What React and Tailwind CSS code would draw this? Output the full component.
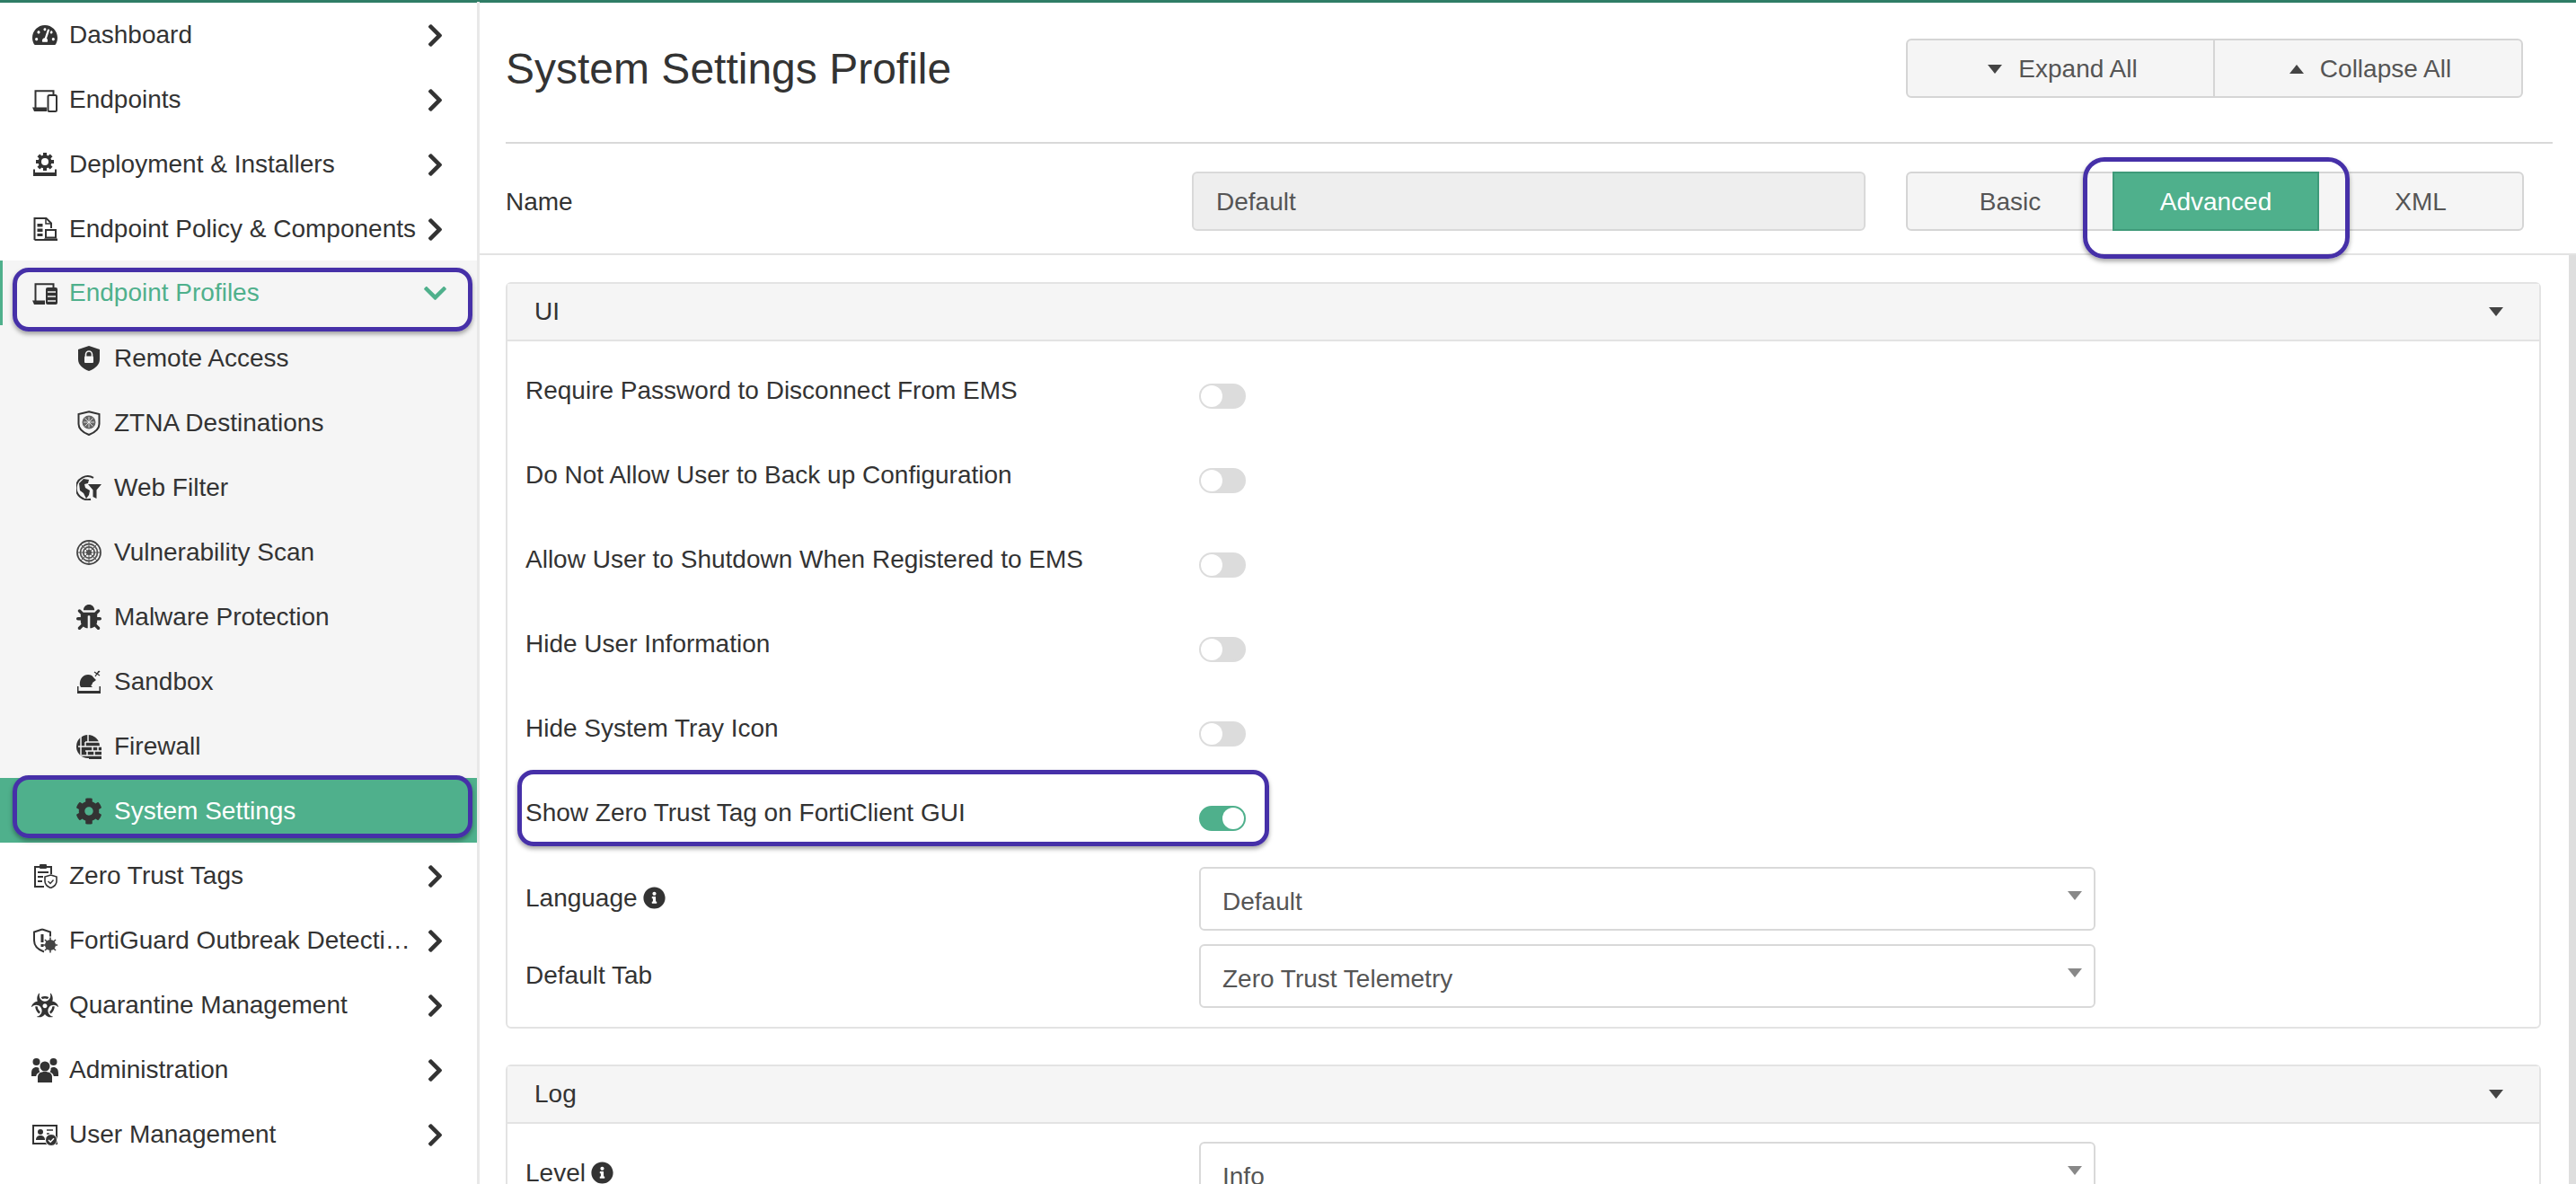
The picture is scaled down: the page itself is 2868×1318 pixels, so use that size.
import React from "react";
import { FaTachometerAlt, FaBug, FaCog, FaBiohazard, FaChevronRight, FaChevronDown, FaInfoCircle } from "react-icons/fa";

const S = ({ children }) => (
  <svg viewBox="0 0 28 28" width="28" height="28" fill="currentColor" className="shrink-0">{children}</svg>
);

const gearTeeth = [0, 45, 90, 135].map((a) => (
  <rect key={a} x="12" y="1" width="4" height="20" transform={`rotate(${a} 14 11)`} />
));

const IEndpoints = () => (
  <S>
    <path d="M3.5 23V4.2h20V8" fill="none" stroke="currentColor" strokeWidth="2" />
    <path d="M0 22.5h16v4.5H2z" />
    <rect x="17.5" y="9" width="9.5" height="18" rx="1.5" fill="none" stroke="currentColor" strokeWidth="2" />
  </S>
);
const IDeploy = () => (
  <S>
    {gearTeeth}
    <circle cx="14" cy="11" r="7.5" />
    <circle cx="14" cy="11" r="4" fill="#fff" />
    <path d="M1 19.5V27h26v-7.5h-2V23H3v-3.5z" />
  </S>
);
const IPolicy = () => (
  <S>
    <path d="M2.5 26V2h13l5.5 5.5V13" fill="none" stroke="currentColor" strokeWidth="2" />
    <path d="M2.5 26H13" stroke="currentColor" strokeWidth="2" />
    <path d="M15 2v6h6" fill="none" stroke="currentColor" strokeWidth="1.5" />
    <rect x="5.5" y="8" width="6" height="3.5" />
    <rect x="5.5" y="13.5" width="6" height="3.5" />
    <rect x="5.5" y="19" width="6" height="3" />
    <rect x="15" y="15" width="11" height="8.5" fill="none" stroke="currentColor" strokeWidth="2" />
    <rect x="13" y="24.5" width="15" height="2.5" />
  </S>
);
const IProfiles = () => (
  <S>
    <path d="M3.5 23V4.2h20V8" fill="none" stroke="currentColor" strokeWidth="2" />
    <path d="M0 22.5h14v4.5H2z" />
    <rect x="15" y="8" width="13" height="19" rx="2" />
    <path d="M17 13h9M17 18h9M17 23h9" stroke="#f5f5f5" strokeWidth="1.6" />
  </S>
);
const IShieldLock = () => (
  <S>
    <path d="M14 0 L26 4v11c0 6-5 10.500-12 13C7 25.500 2 21 2 15V4z" />
    <path d="M10.500 12V9.500a3.500 3.500 0 0 1 7 0V12" fill="none" stroke="#f5f5f5" strokeWidth="1.6" />
    <rect x="9" y="11.500" width="10" height="7.500" rx="1" fill="#f5f5f5" />
  </S>
);
const IZtna = () => (
  <S>
    <path d="M14 1.200 L25.500 4v11c0 6-5 9.500-11.500 12C7.500 24.500 2.500 21 2.500 15V4z" fill="none" stroke="currentColor" strokeWidth="2" />
    <circle cx="14" cy="13" r="7.500" fill="#666" />
    <path d="M8 13h12M14 7v12M9.500 8.500l9 9M18.500 8.500l-9 9" stroke="#f5f5f5" strokeWidth="0.8" />
  </S>
);
const IWebFilter = () => (
  <S>
    <path d="M19 2.800A13 13 0 1 0 16 26.800" fill="none" stroke="currentColor" strokeWidth="2" />
    <path d="M3 9l5-5 6 1-1 4-4 1 1 4 5 3-1 5-3 4-3-6-4-3z" />
    <path d="M13 10h15l-5.500 6.500V26l-4-2v-7.500z" />
  </S>
);
const IVuln = () => (
  <S>
    <circle cx="14" cy="14" r="13" fill="none" stroke="#444" strokeWidth="1.800" />
    <circle cx="14" cy="14" r="9.500" fill="none" stroke="#555" strokeWidth="1.800" />
    <circle cx="14" cy="14" r="6.200" fill="none" stroke="#555" strokeWidth="1.800" />
    <circle cx="14" cy="14" r="3" fill="#444" />
    <path d="M14 1v26M1 14h26M4.800 4.800l18.400 18.400M23.200 4.800L4.800 23.200" stroke="#555" strokeWidth="1" />
  </S>
);
const IBug = () => <FaBug size={28} className="shrink-0" />;
const ISandbox = () => (
  <S>
    <path d="M4 18c-1-6 3-12 9-12 3 0 5 1 6 3l3 3-4 3c0 1-1 3-2 3l2 2H5z" />
    <path d="M21 8l4-6M20 3l6 4M26 2l-4 4" stroke="currentColor" strokeWidth="1.300" fill="none" />
    <path d="M1 19v8h26v-8h-1.500v5H2.500v-5z" />
  </S>
);
const IFirewall = () => (
  <S>
    <circle cx="13" cy="14" r="13" />
    <rect x="14" y="14" width="14" height="14" />
    <path d="M10 9h18M2 14h26M10 19h18M6 24h22M10 9v5M18 14v5M24 14v5M12 19v5M20 19v5M5 3v22M13 1v8" stroke="#f5f5f5" strokeWidth="1.500" fill="none" />
  </S>
);
const ICog = () => <FaCog size={30} className="-mx-px shrink-0" />;
const IZeroTrust = () => (
  <S>
    <path d="M13 26H3V4h18v8" fill="none" stroke="currentColor" strokeWidth="2" />
    <rect x="8" y="1" width="8" height="5" rx="1" />
    <path d="M6 10h12M6 15h6M6 20h5" stroke="currentColor" strokeWidth="2" />
    <path d="M20.500 13l6.500 2v5c0 3.500-3 6-6.500 7.500-3.500-1.500-6.500-4-6.500-7.500v-5z" fill="#fff" stroke="currentColor" strokeWidth="1.600" />
    <path d="M17.500 20l2.500 2.500 3.500-4" fill="none" stroke="currentColor" strokeWidth="1.400" />
  </S>
);
const IForti = () => (
  <S>
    <path d="M11 1.500 L20 4.500v5M13 26.500C6 24 2 20 2 14V4.500L11 1.500" fill="none" stroke="currentColor" strokeWidth="2" />
    <rect x="9.500" y="7" width="3" height="9" />
    <rect x="9.500" y="18" width="3" height="3" />
    <circle cx="20" cy="19" r="6" fill="#444" />
    <path d="M20 10.500v17M11.500 19h17M14 13l12 12M26 13L14 25" stroke="#444" strokeWidth="1.600" />
  </S>
);
const IUsers = () => (
  <svg viewBox="0 0 30 28" width="30" height="28" fill="currentColor" className="-mx-px shrink-0">
    <circle cx="5.500" cy="5" r="4" />
    <circle cx="24.500" cy="5" r="4" />
    <circle cx="15" cy="10" r="5.500" />
    <path d="M7 28v-6c0-4 3-6 8-6s8 2 8 6v6z" />
    <path d="M0 18c0-5 2-7 5.500-7 1.200 0 2.200.3 3 1-.3 1.500 0 3 1 4.300-2.500 1-4 2.700-4.300 4.700H0zM30 18c0-5-2-7-5.500-7-1.200 0-2.200.3-3 1 .3 1.500 0 3-1 4.300 2.500 1 4 2.700 4.300 4.700H30z" />
  </svg>
);
const IBio = () => <FaBiohazard size={30} className="-mx-px shrink-0" />;
const IUser = () => (
  <S>
    <rect x="1" y="4" width="26" height="20" fill="none" stroke="currentColor" strokeWidth="2" />
    <circle cx="9" cy="11" r="3" />
    <path d="M4 20c0-3.500 2-5 5-5s5 1.500 5 5z" />
    <path d="M16 9h7M16 13h3" stroke="currentColor" strokeWidth="1.600" />
    <circle cx="21" cy="20" r="6.500" stroke="#fff" strokeWidth="1" />
    <path d="M18 20l2.200 2.200 3.800-4" fill="none" stroke="#fff" strokeWidth="1.500" />
  </S>
);

const Chevron = ({ open }) => (
  <span className={"flex w-[30px] shrink-0 items-center justify-center " + (open ? "text-[#4fb08c]" : "text-[#333]")}>
    {open ? <FaChevronDown size={29} /> : <FaChevronRight size={29} />}
  </span>
);

const Mark = ({ className }) => (
  <span className={"pointer-events-none absolute rounded-[18px] border-[5px] border-[#4630a8] shadow-[0_3px_5px_rgba(0,0,0,0.35)] " + className} />
);

const TopItem = ({ icon, label }) => (
  <div className="flex h-[72px] items-center pl-[36px] pr-[32px] pt-[2px] text-[#333]">
    <span className="flex w-[28px] shrink-0 justify-center">{icon}</span>
    <span className="ml-[13px] min-w-0 flex-1 truncate pr-[4px]">{label}</span>
    <Chevron />
  </div>
);

const SubItem = ({ icon, label }) => (
  <div className="flex h-[72px] items-center pl-[85px] pt-[2px] text-[#333]">
    {icon}
    <span className="ml-[14px]">{label}</span>
  </div>
);

const Toggle = ({ on }) => (
  <span className={"flex h-[28px] w-[52px] items-center rounded-full border-2 " + (on ? "justify-end border-[#4fb08c] bg-[#4fb08c]" : "justify-start border-[#dcdcdc] bg-[#dcdcdc]")}>
    <span className="h-[24px] w-[24px] rounded-full bg-white" />
  </span>
);

const ToggleRow = ({ label, on, mark }) => (
  <div className="relative flex h-[94px] items-center pl-[20px]">
    <span className="w-[750px] pb-[12px]">{label}</span>
    <Toggle on={on} />
    {mark && <Mark className="-top-[7px] left-[11px] h-[85px] w-[837px]" />}
  </div>
);

const Tri = ({ className }) => (
  <span className={"h-0 w-0 border-x-[8px] border-x-transparent " + className} />
);

const Select = ({ value }) => (
  <div className="flex h-[71px] w-[998px] items-center justify-between rounded-[6px] border-2 border-[#d9d9d9] bg-white pl-[24px] pr-[13px]">
    <span className="pt-[7px] text-[#555]">{value}</span>
    <Tri className="mb-[8px] border-t-[10px] border-t-[#888]" />
  </div>
);

const FormRow = ({ label, info, value, className = "" }) => (
  <div className={"flex pl-[20px] " + className}>
    <span className="flex w-[750px] items-center gap-[6px] pb-[2px]">
      {label}
      {info && <FaInfoCircle size={25} className="text-[#333]" />}
    </span>
    <Select value={value} />
  </div>
);

const PanelHead = ({ title }) => (
  <div className="flex h-[64px] items-center justify-between border-b-2 border-[#e3e3e3] bg-[#f5f5f5] pl-[30px] pr-[40px]">
    <span>{title}</span>
    <Tri className="border-t-[10px] border-t-[#444]" />
  </div>
);

export default function App() {
  return (
    <div className="flex h-[1318px] w-[2868px] flex-col overflow-hidden bg-white font-['Liberation_Sans',Arial,sans-serif] text-[28px] text-[#333]">
      <div className="h-[3px] shrink-0 bg-[#2f7d66]" />
      <div className="flex min-h-0 flex-1">
        <aside className="-mt-px w-[534px] shrink-0 border-r-[3px] border-[#e8e8e8]">
          <TopItem icon={<FaTachometerAlt size={28} />} label="Dashboard" />
          <TopItem icon={<IEndpoints />} label="Endpoints" />
          <TopItem icon={<IDeploy />} label="Deployment & Installers" />
          <TopItem icon={<IPolicy />} label="Endpoint Policy & Components" />
          <div className="bg-[#f5f5f5]">
            <div className="relative flex h-[72px] items-center border-l-[3px] border-[#4fb08c] pl-[33px] pr-[32px]">
              <IProfiles />
              <span className="ml-[13px] flex-1 text-[#4fb08c]">Endpoint Profiles</span>
              <Chevron open />
              <Mark className="left-[11px] top-[8px] h-[71px] w-[512px]" />
            </div>
            <SubItem icon={<IShieldLock />} label="Remote Access" />
            <SubItem icon={<IZtna />} label="ZTNA Destinations" />
            <SubItem icon={<IWebFilter />} label="Web Filter" />
            <SubItem icon={<IVuln />} label="Vulnerability Scan" />
            <SubItem icon={<IBug />} label="Malware Protection" />
            <SubItem icon={<ISandbox />} label="Sandbox" />
            <SubItem icon={<IFirewall />} label="Firewall" />
          </div>
          <div className="relative flex h-[72px] items-center bg-[#4fb08c] pl-[85px] pt-[2px] text-[#333]">
            <ICog />
            <span className="ml-[14px] text-white">System Settings</span>
            <Mark className="left-[14px] -top-[3px] h-[70px] w-[512px]" />
          </div>
          <TopItem icon={<IZeroTrust />} label="Zero Trust Tags" />
          <TopItem icon={<IForti />} label="FortiGuard Outbreak Detection Service" />
          <TopItem icon={<IBio />} label="Quarantine Management" />
          <TopItem icon={<IUsers />} label="Administration" />
          <TopItem icon={<IUser />} label="User Management" />
        </aside>

        <main className="flex min-w-0 flex-1 flex-col">
          <div className="pl-[29px] pr-[26px]">
            <div className="flex h-[157px] items-start justify-between border-b-2 border-[#d9d9d9] pt-[40px]">
              <h1 className="pt-[2px] text-[48px] leading-[64px] text-[#333]">System Settings Profile</h1>
              <div className="mr-[33px] flex h-[66px] w-[687px] rounded-[6px] border-2 border-[#d5d5d5] bg-[#f5f5f5] text-[#555]">
                <div className="flex w-[342px] items-center justify-center gap-[18px] border-r-2 border-[#d5d5d5] pl-[5px] pt-[2px]">
                  <Tri className="border-t-[10px] border-t-[#444]" />
                  Expand All
                </div>
                <div className="flex flex-1 items-center justify-center gap-[18px] pl-[5px] pt-[2px]">
                  <Tri className="border-b-[10px] border-b-[#444]" />
                  Collapse All
                </div>
              </div>
            </div>
          </div>
          <div className="flex h-[124px] shrink-0 items-start border-b-2 border-[#e3e3e3] pl-[29px] pt-[31px]">
            <span className="flex h-[66px] w-[764px] items-center pt-[2px]">Name</span>
            <div className="flex h-[66px] w-[750px] items-center rounded-[6px] border-2 border-[#d9d9d9] bg-[#eeeeee] pl-[25px] pt-[2px] text-[#555]">Default</div>
            <div className="ml-[45px] flex h-[66px] w-[688px] rounded-[6px] border-2 border-[#d5d5d5] bg-[#f5f5f5] text-[#555]">
              <div className="flex w-[228px] items-center justify-center pt-[2px]">Basic</div>
              <div className="relative -my-[2px] flex w-[230px] items-center justify-center border-2 border-[#3f9a79] bg-[#4fb08c] pt-[2px] text-white">
                Advanced
                <Mark className="-left-[35px] -top-[18px] h-[113px] w-[297px] !rounded-[24px]" />
              </div>
              <div className="flex flex-1 items-center justify-center pt-[2px]">XML</div>
            </div>
          </div>
          <div className="flex min-h-0 flex-1">
            <div className="min-w-0 flex-1 overflow-hidden pl-[29px] pr-[31px] pt-[30px]">
              <section className="rounded-[6px] border-2 border-[#e3e3e3]">
                <PanelHead title="UI" />
                <div className="pb-[21px] pt-[14px]">
                  <ToggleRow label="Require Password to Disconnect From EMS" />
                  <ToggleRow label="Do Not Allow User to Back up Configuration" />
                  <ToggleRow label="Allow User to Shutdown When Registered to EMS" />
                  <ToggleRow label="Hide User Information" />
                  <ToggleRow label="Hide System Tray Icon" />
                  <ToggleRow label="Show Zero Trust Tag on FortiClient GUI" on mark />
                  <FormRow className="mt-[7px]" label="Language" info value="Default" />
                  <FormRow className="mt-[15px]" label="Default Tab" value="Zero Trust Telemetry" />
                </div>
              </section>
              <section className="mt-[40px] rounded-[6px] border-2 border-[#e3e3e3]">
                <PanelHead title="Log" />
                <div className="pt-[20px]">
                  <FormRow label="Level" info value="Info" />
                </div>
              </section>
            </div>
            <div className="w-[8px] shrink-0 bg-[#dedede]" />
          </div>
        </main>
      </div>
    </div>
  );
}
